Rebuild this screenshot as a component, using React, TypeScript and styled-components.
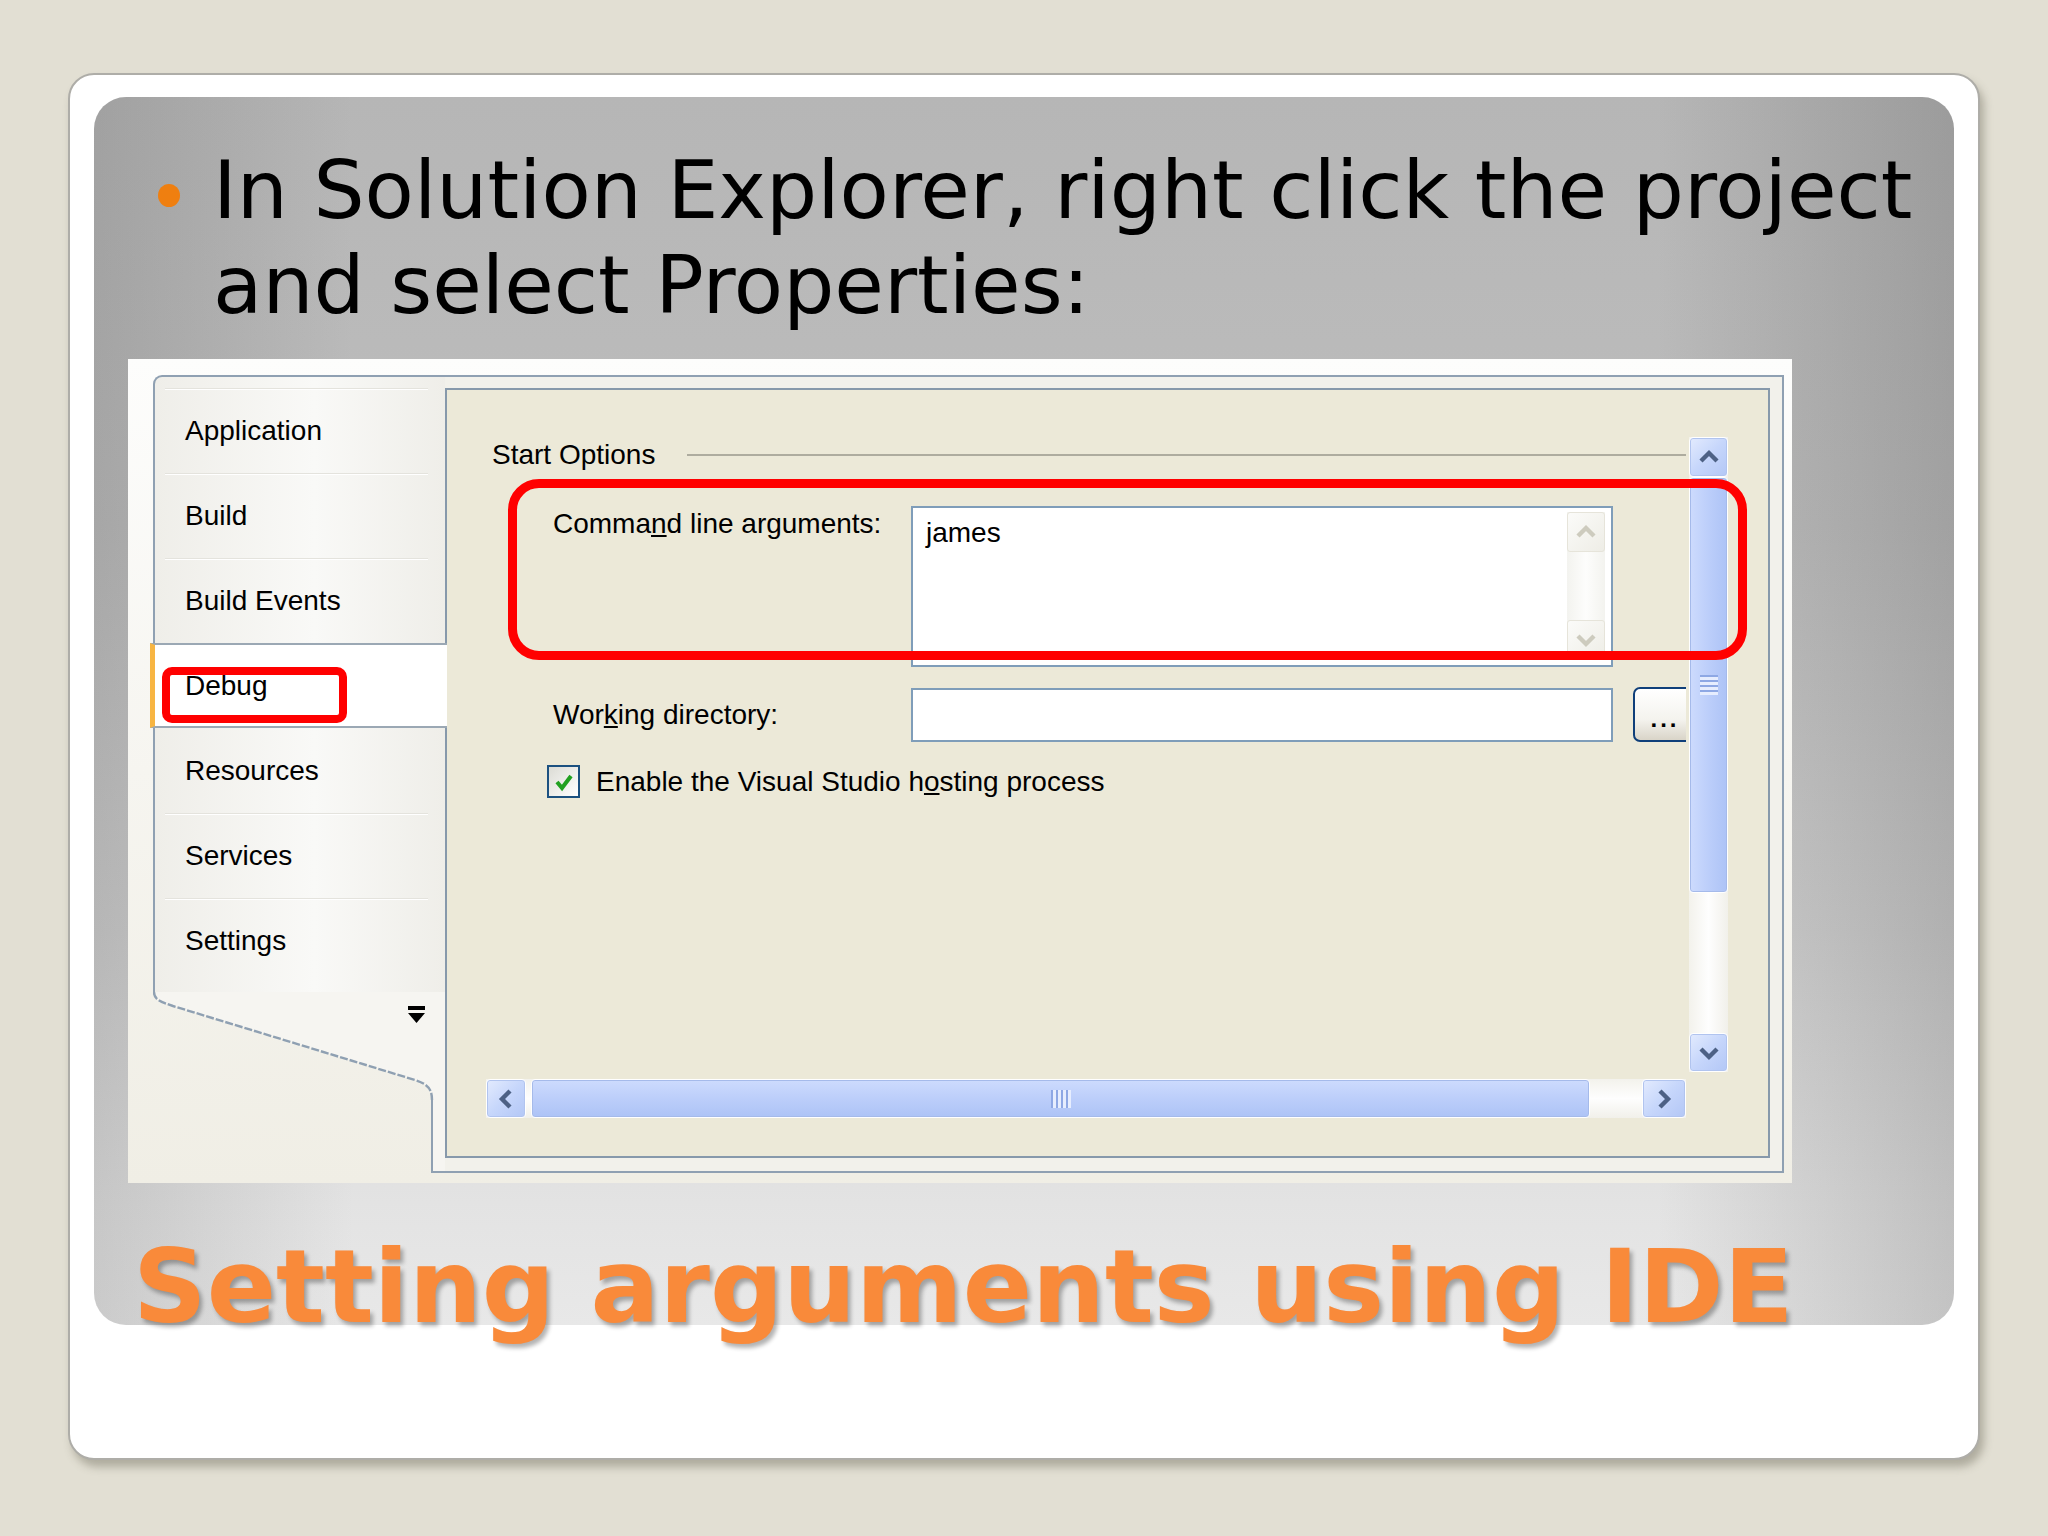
import React from 'react';
import styled, { createGlobalStyle, css } from 'styled-components';

// Global
const GlobalStyle = createGlobalStyle`
  *, *::before, *::after { box-sizing: border-box; }
  html, body { margin: 0; padding: 0; }
  body {
    width: 2048px;
    height: 1536px;
    overflow: hidden;
    background: #e2dfd3;
    font-family: "DejaVu Sans", Verdana, sans-serif;
  }
`;

// Slide
const Page = styled.div`
  width: 2048px;
  height: 1536px;
  padding: 73px 0 0 68px;
`;

const Card = styled.div`
  width: 1912px;
  height: 1387px;
  padding: 22px 24px 0;
  background: #ffffff;
  border: 2px solid #aeada8;
  border-radius: 26px;
  box-shadow: 4px 7px 9px rgba(80, 76, 60, 0.35);
`;

const Panel = styled.div`
  display: flex;
  flex-direction: column;
  height: 1228px;
  padding-top: 46px;
  border-radius: 32px;
  background:
    linear-gradient(to right, rgba(50, 50, 50, 0.16) 0%, rgba(50, 50, 50, 0) 14%, rgba(50, 50, 50, 0) 84%, rgba(50, 50, 50, 0.1) 92%, rgba(50, 50, 50, 0.2) 100%),
    linear-gradient(to bottom, #b6b6b6 0%, #bdbdbd 35%, #d0d0d0 68%, #e3e3e3 90%, #e8e8e8 100%);
`;

const BulletRow = styled.div`
  display: flex;
  align-items: flex-start;
  padding-left: 64px;
`;

const Dot = styled.span`
  flex: none;
  width: 22px;
  height: 23px;
  margin-top: 41px;
  border-radius: 50%;
  background: #ef7f10;
`;

const Lead = styled.p`
  margin: 0 0 0 33px;
  font-family: "DejaVu Sans", Verdana, sans-serif;
  font-size: 80.6px;
  line-height: 95px;
  color: #000;
  white-space: nowrap;
`;

const Title = styled.h1`
  margin: 53px 0 0 39px;
  font-family: "DejaVu Sans", Verdana, sans-serif;
  font-weight: bold;
  font-size: 102.3px;
  line-height: 102px;
  color: #f98a3a;
  text-shadow: 3px 4px 4px rgba(0, 0, 0, 0.3);
  white-space: nowrap;
`;

// Screenshot of the IDE
const Shot = styled.div`
  position: relative;
  align-self: flex-start;
  width: 1664px;
  height: 824px;
  margin: 26px 0 0 34px;
  padding: 16px 8px 10px 25px;
  background: linear-gradient(to bottom, #fdfdfc 0%, #f6f5f0 50%, #f0eee5 100%);
  font-family: "Liberation Sans", Arial, sans-serif;
  font-size: 28px;
  line-height: 32px;
  color: #000;
`;

const Frame = styled.div`
  display: flex;
  height: 100%;
`;

const NavColumn = styled.div`
  flex: none;
  width: 292px;
  display: flex;
  flex-direction: column;
`;

const NavBody = styled.div`
  padding: 11px 0 9px;
  border-top: 2px solid #8fa0b2;
  border-left: 2px solid #8fa0b2;
  border-top-left-radius: 9px;
  background: linear-gradient(to right, #efeee9 0%, #f9f9f7 55%, #efeee9 100%);
`;

const NavItem = styled.div<{ $selected?: boolean; $afterSelected?: boolean }>`
  position: relative;
  height: 85px;
  display: flex;
  align-items: center;
  padding-left: 30px;
  white-space: nowrap;

  ${p => p.$selected ? css`
    z-index: 2;
    margin: 0 -2px 0 -5px;
    background: #ffffff;
    border-top: 2px solid #9ba8b4;
    border-bottom: 2px solid #9ba8b4;
    border-left: 5px solid #f7b542;
  ` : css`
    &::before {
      content: '';
      display: ${p.$afterSelected ? 'none' : 'block'};
      position: absolute;
      top: 0;
      left: 10px;
      right: 17px;
      height: 2px;
      background: #e4e3dd;
      border-bottom: 1px solid #ffffff;
    }
  `}
`;

const ContentColumn = styled.div`
  flex: 1;
  padding: 11px 12px 13px 0;
  border-top: 2px solid #8fa0b2;
  border-right: 2px solid #8fa0b2;
  border-bottom: 2px solid #8fa0b2;
  background: #f2f1eb;
`;

const InnerPanel = styled.div`
  height: 770px;
  display: grid;
  grid-template-columns: 1200px 39px;
  grid-template-rows: 635px 39px;
  column-gap: 3px;
  row-gap: 7px;
  padding: 47px 40px 38px 39px;
  border: 2px solid #8799ab;
  background: #ece9d8;
`;

const Viewport = styled.div`
  position: relative;
  overflow: hidden;
  display: flex;
  flex-direction: column;
`;

const GroupHeader = styled.div`
  display: flex;
  align-items: center;
  gap: 32px;
  height: 32px;
  margin-top: 2px;
  padding-left: 6px;
`;

const GroupRule = styled.div`
  flex: 1;
  height: 2px;
  background: #aeac9f;
`;

const FieldRow = styled.div<{ $gap: number; $align?: string }>`
  display: flex;
  align-items: ${p => p.$align || 'center'};
  margin-top: ${p => p.$gap}px;
  padding-left: 67px;
`;

const FieldLabel = styled.div<{ $offset?: number }>`
  flex: none;
  width: 358px;
  margin-top: ${p => p.$offset || 0}px;
  white-space: nowrap;
`;

const TextArea = styled.div`
  flex: none;
  display: flex;
  width: 702px;
  height: 161px;
  border: 2px solid #7f9db9;
  background: #ffffff;
`;

const TextValue = styled.div`
  flex: 1;
  padding: 9px 0 0 13px;
`;

const InnerScroll = styled.div`
  flex: none;
  display: flex;
  flex-direction: column;
  justify-content: space-between;
  width: 38px;
  margin: 4px 6px 5px 0;
  background: linear-gradient(to right, #f3f3ef, #fdfdfc 50%, #f3f3ef);
`;

const DisabledBtn = styled.div`
  display: flex;
  align-items: center;
  justify-content: center;
  height: 40px;
  border: 1px solid #e6e4da;
  border-radius: 3px;
  background: linear-gradient(135deg, #fbfbf9, #eeede6);
`;

const TextInput = styled.div`
  flex: none;
  width: 702px;
  height: 54px;
  border: 2px solid #7f9db9;
  background: #ffffff;
`;

const BrowseButton = styled.div`
  flex: none;
  display: flex;
  align-items: center;
  justify-content: center;
  width: 64px;
  height: 55px;
  margin-left: 20px;
  padding-top: 8px;
  border: 2px solid #0f3f7a;
  border-radius: 7px;
  background: linear-gradient(to bottom, #ffffff 0%, #f4f3ee 60%, #d9d4c8 100%);
  font-size: 24px;
  font-weight: bold;
  letter-spacing: 3px;
`;

const CheckRow = styled.div`
  display: flex;
  align-items: center;
  gap: 16px;
  margin-top: 23px;
  padding-left: 61px;
  white-space: nowrap;
`;

const CheckBox = styled.div`
  flex: none;
  display: flex;
  align-items: center;
  justify-content: center;
  width: 33px;
  height: 33px;
  border: 2px solid #1c5180;
  background: linear-gradient(135deg, #dcdcd5, #ffffff);
`;

// Scrollbars (XP style)
const VScroll = styled.div`
  display: flex;
  flex-direction: column;
  background: linear-gradient(to right, #f3f2ec, #fefefe 50%, #f1f0ea);
`;

const HScroll = styled.div`
  display: flex;
  background: linear-gradient(to bottom, #f3f2ec, #fefefe 50%, #f1f0ea);
`;

const ScrollBtn = styled.div<{ $w: number; $h: number }>`
  flex: none;
  display: flex;
  align-items: center;
  justify-content: center;
  width: ${p => p.$w}px;
  height: ${p => p.$h}px;
  border: 1px solid #ffffff;
  border-radius: 4px;
  background: linear-gradient(135deg, #e3ebfe 0%, #c6d6fb 50%, #b3c7f6 100%);
  box-shadow: inset 0 0 0 1px #b1c4ef;
`;

const Thumb = styled.div<{ $vertical?: boolean }>`
  flex: none;
  display: flex;
  align-items: center;
  justify-content: center;
  border: 1px solid #ffffff;
  border-radius: 4px;
  box-shadow: inset 0 0 0 1px #a5baea;
  ${p => p.$vertical ? css`
    height: 416px;
    background: linear-gradient(to right, #cddbfd 0%, #bccefa 50%, #adc3f6 100%);
  ` : css`
    width: 1059px;
    margin-left: 5px;
    background: linear-gradient(to bottom, #cddbfd 0%, #bccefa 50%, #adc3f6 100%);
  `}
`;

const Grip = styled.div<{ $vertical?: boolean }>`
  ${p => p.$vertical ? css`
    width: 18px;
    height: 20px;
    background: repeating-linear-gradient(to bottom, #8ea8e4 0 2px, #e6edfe 2px 5px);
  ` : css`
    width: 20px;
    height: 18px;
    background: repeating-linear-gradient(to right, #8ea8e4 0 2px, #e6edfe 2px 5px);
  `}
`;

const Track = styled.div`
  flex: 1;
`;

const Callout = styled.div<{ $x: number; $y: number; $w: number; $h: number; $stroke: number; $radius: number }>`
  position: absolute;
  left: ${p => p.$x}px;
  top: ${p => p.$y}px;
  width: ${p => p.$w}px;
  height: ${p => p.$h}px;
  border: ${p => p.$stroke}px solid #ff0000;
  border-radius: ${p => p.$radius}px;
  pointer-events: none;
  z-index: 5;
`;

// Icons
type Dir = 'up' | 'down' | 'left' | 'right';

const Arrow: React.FC<{ dir: Dir; color?: string }> = ({ dir, color = '#4d6185' }) => {
  const pts = {
    up: '3,15 11,7 19,15',
    down: '3,7 11,15 19,7',
    left: '15,3 7,11 15,19',
    right: '7,3 15,11 7,19',
  }[dir];
  return (
    <svg width="22" height="22" viewBox="0 0 22 22">
      <polyline points={pts} fill="none" stroke={color} strokeWidth="4.4" strokeLinejoin="miter" />
    </svg>
  );
};

const CheckMark = () => (
  <svg width="24" height="24" viewBox="0 0 24 24">
    <polyline points="5,12 10,18 19,6" fill="none" stroke="#21a121" strokeWidth="4" />
  </svg>
);

const NavTail = () => (
  <svg width="292" height="181" viewBox="0 0 292 181" style={{ display: 'block' }}>
    <path
      d="M1,0 C1,8 8,10 20,14 L262,88 C274,92 279,96 279,108 L279,181 L292,181 L292,0 Z"
      fill="#f6f5f1"
    />
    <path
      d="M1,0 C1,8 8,10 20,14 L262,88 C274,92 279,96 279,108"
      fill="none"
      stroke="#8fa0b2"
      strokeWidth="2.4"
      strokeDasharray="8 2"
    />
    <path d="M279,108 L279,180 L292,180" fill="none" stroke="#8fa0b2" strokeWidth="2" />
    <rect x="255" y="14" width="17" height="4" fill="#000" />
    <polygon points="255,21 272,21 263.5,31" fill="#000" />
  </svg>
);

const navItems = ['Application', 'Build', 'Build Events', 'Debug', 'Resources', 'Services', 'Settings'];
const selected = 'Debug';

export default function App() {
  const selectedIndex = navItems.indexOf(selected);

  return (
    <>
      <GlobalStyle />
      <Page>
        <Card>
          <Panel>
            <BulletRow>
              <Dot />
              <Lead>
                In Solution Explorer, right click the project
                <br />
                and select Properties:
              </Lead>
            </BulletRow>

            <Shot>
              <Frame>
                <NavColumn>
                  <NavBody>
                    {navItems.map((item, i) => (
                      <NavItem
                        key={item}
                        $selected={i === selectedIndex}
                        $afterSelected={i === selectedIndex + 1}
                      >
                        {item}
                      </NavItem>
                    ))}
                  </NavBody>
                  <NavTail />
                </NavColumn>

                <ContentColumn>
                  <InnerPanel>
                    <Viewport>
                      <GroupHeader>
                        <span>Start Options</span>
                        <GroupRule />
                      </GroupHeader>

                      <FieldRow $gap={35} $align="flex-start">
                        <FieldLabel $offset={2}>Comma<u>n</u>d line arguments:</FieldLabel>
                        <TextArea>
                          <TextValue>james</TextValue>
                          <InnerScroll>
                            <DisabledBtn><Arrow dir="up" color="#cdcbbe" /></DisabledBtn>
                            <DisabledBtn><Arrow dir="down" color="#cdcbbe" /></DisabledBtn>
                          </InnerScroll>
                        </TextArea>
                      </FieldRow>

                      <FieldRow $gap={20}>
                        <FieldLabel>Wor<u>k</u>ing directory:</FieldLabel>
                        <TextInput />
                        <BrowseButton>...</BrowseButton>
                      </FieldRow>

                      <CheckRow>
                        <CheckBox><CheckMark /></CheckBox>
                        <span>Enable the Visual Studio h<u>o</u>sting process</span>
                      </CheckRow>
                    </Viewport>

                    <VScroll>
                      <ScrollBtn $w={39} $h={40}><Arrow dir="up" /></ScrollBtn>
                      <Thumb $vertical><Grip $vertical /></Thumb>
                      <Track />
                      <ScrollBtn $w={39} $h={39}><Arrow dir="down" /></ScrollBtn>
                    </VScroll>

                    <HScroll>
                      <ScrollBtn $w={40} $h={39}><Arrow dir="left" /></ScrollBtn>
                      <Thumb><Grip /></Thumb>
                      <Track />
                      <ScrollBtn $w={44} $h={39}><Arrow dir="right" /></ScrollBtn>
                    </HScroll>

                    <div />
                  </InnerPanel>
                </ContentColumn>
              </Frame>

              <Callout $x={380} $y={120} $w={1239} $h={181} $stroke={9} $radius={31} />
              <Callout $x={34} $y={308} $w={185} $h={56} $stroke={8} $radius={10} />
            </Shot>

            <Title>Setting arguments using IDE</Title>
          </Panel>
        </Card>
      </Page>
    </>
  );
}
